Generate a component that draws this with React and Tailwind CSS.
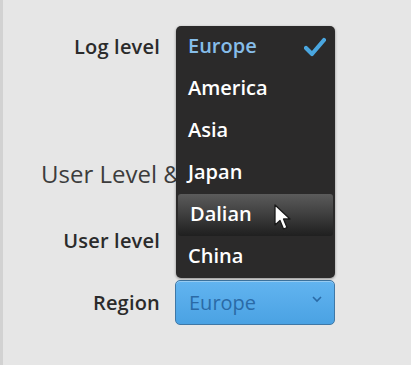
import { useState } from 'react';

const regions = ['Europe', 'America', 'Asia', 'Japan', 'Dalian', 'China'];

function Check() {
  return (
    <svg width="22" height="20" viewBox="0 0 22 20" className="block">
      <path d="M2 11 L8 17 L20 3" fill="none" stroke="#4aa6df" strokeWidth="4.2" strokeLinecap="round" strokeLinejoin="round" />
    </svg>
  );
}

function Cursor() {
  return (
    <svg width="18" height="28" viewBox="0 0 18 28" className="block">
      <path d="M1 1 L1 21 L6 16.5 L9.5 25 L13 23.5 L9.5 15 L16 15 Z" fill="#ffffff" stroke="#1a1a1a" strokeWidth="1.3" strokeLinejoin="round" />
    </svg>
  );
}

function Row({ label, children, className = '' }) {
  return (
    <div className={`flex items-center ${className}`}>
      <div className="w-[160px] text-right text-[20px] font-semibold tracking-[0.2px] text-[#2b2b2b]">{label}</div>
      <div className="ml-[15px]">{children}</div>
    </div>
  );
}

export default function App() {
  const [selected] = useState('Europe');
  const hovered = 'Dalian';

  return (
    <div
      className="relative w-[411px] h-[365px] overflow-hidden bg-[#e6e6e6] border-l-[3px] border-[#d2d2d2]"
      style={{ fontFamily: '"Open Sans", "Noto Sans", sans-serif' }}
    >
      <div className="flex flex-col pt-[27px]">
        <Row label="Log level" className="-ml-[3px]">
          <div className="w-[159px] h-[40px]" />
        </Row>

        <div className="mt-[89px] pl-[38px] text-[24px] leading-[36px] text-[#3c3c3c]">User Level &amp; Region</div>

        <Row label="User level" className="-ml-[3px] mt-[29px]">
          <div className="w-[159px] h-[40px]" />
        </Row>

        <Row label="Region" className="-ml-[3px] mt-[19px]">
          <div className="w-[160px] h-[45px] rounded-[5px] border border-[#3f78a6] bg-gradient-to-b from-[#62b4f0] to-[#4aa2e3] shadow-[inset_0_1px_0_rgba(255,255,255,0.35)] flex items-center justify-between pl-[13px] pr-[12px]">
            <span className="text-[20px] text-[#2a6aa6]">Europe</span>
            <svg width="10" height="7" viewBox="0 0 10 7" className="block -mt-[6px]">
              <path d="M1 1 L5 5 L9 1" fill="none" stroke="#2a6aa6" strokeWidth="1.6" />
            </svg>
          </div>
        </Row>
      </div>

      {/* open dropdown list */}
      <div className="absolute left-[173px] top-[26px] w-[159px] h-[252px] rounded-[5px] bg-[#2b2a2a] shadow-[0_1px_3px_rgba(0,0,0,0.4)] flex flex-col overflow-hidden">
        {regions.map((r) => {
          const isSel = r === selected;
          const isHover = r === hovered;
          return (
            <div
              key={r}
              className={`relative h-[42px] flex items-center justify-between pl-[12px] pr-[9px] text-[20px] font-semibold ${
                isSel ? 'text-[#86bde9]' : 'text-white'
              } ${isHover ? 'mx-[2px] pl-[10px] rounded-[3px] bg-gradient-to-b from-[#5b5b5b] via-[#3e3e3e] to-[#1f1f1f]' : ''}`}
            >
              <span className="-mt-[2px]">{r}</span>
              {isSel && <Check />}
              {isHover && (
                <div className="absolute left-[96px] top-[10px]">
                  <Cursor />
                </div>
              )}
            </div>
          );
        })}
      </div>
    </div>
  );
}
